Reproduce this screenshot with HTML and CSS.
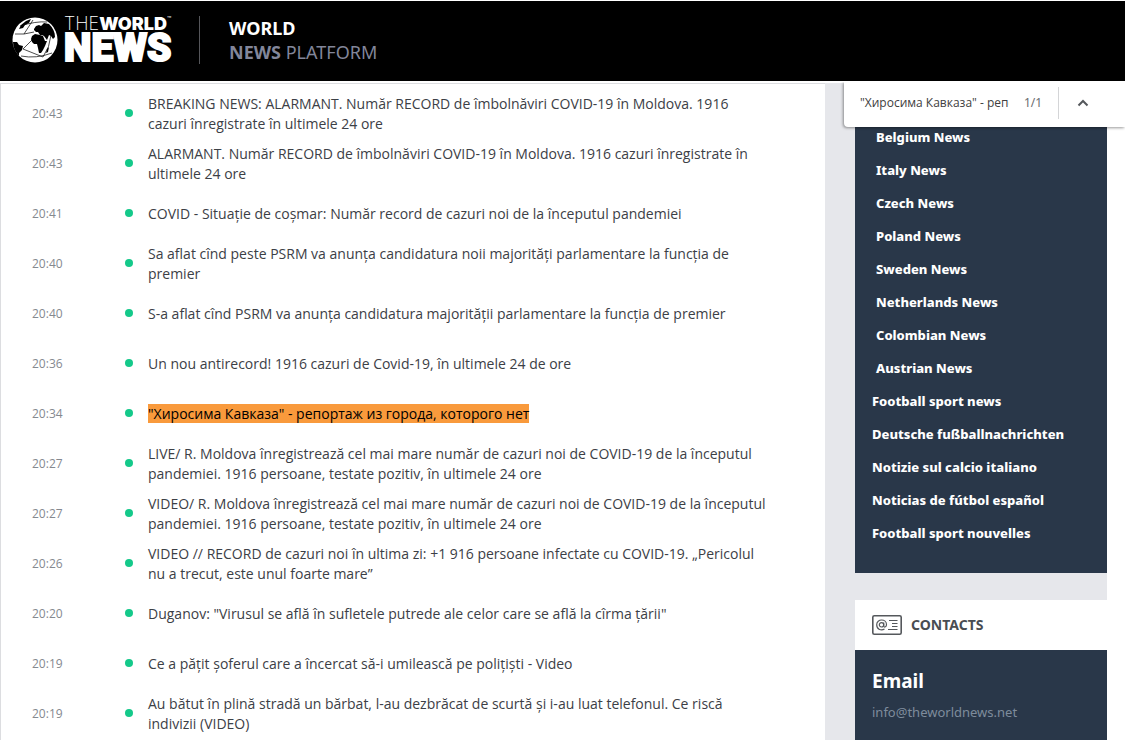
FILE: index.html
```html
<!DOCTYPE html>
<html lang="en">
<head>
  <meta charset="UTF-8">
  <meta name="viewport" content="width=device-width, initial-scale=1.0">
  <title>The World News</title>
  <link rel="stylesheet" href="styles.css">
</head>
<body>
  <header class="header">
    <a class="logo" href="#" aria-label="The World News">
      <svg class="globe" viewBox="0 0 46 46" aria-hidden="true">
        <circle cx="23" cy="23" r="22.5" fill="#fff"/>
        <g fill="#000">
          <!-- Europe and Asia -->
          <path d="M22 12l2-3 3-1 2 1 3-3 5 1c4 4 6 8 6 13l-2 2-2-3-2-1-2 5-3-4-2-1-2 0-2-3-2 0-2-2z"/>
          <!-- Africa -->
          <path d="M20 19l3-2 5 1 3 1 2 5 2 0-2 5-2 4-2 3-2 0-1-5-1-4-3 0-2-2-1-3z"/>
          <!-- South America -->
          <path d="M1 25l4 0 2 3 4 1-1 4-3 3 0 3C3 35 1 30 1 25z"/>
          <!-- North America -->
          <path d="M9 8l5-4 5-2-2 4-4 2-2 3-4 1z"/>
          <path d="M35 32l2-2-1 5-2 1z"/>
        </g>
        <g fill="none" stroke="#000" stroke-width="0.7">
          <path d="M3 17L12 17L21 3M12 17L22 15M8 9Q24 4 35 5M11 32L31 40M11 32L21 22M9 39Q24 42 40 36M31 40Q38 30 39 18"/>
        </g>
      </svg>
      <span class="logo-text">
        <span class="logo-top"><span class="logo-the">THE</span><b>WORLD</b><sup>™</sup></span>
        <span class="logo-bottom">NEWS</span>
      </span>
    </a>
    <div class="platform">
      <strong>WORLD</strong>
      <span><b>NEWS</b> PLATFORM</span>
    </div>
  </header>

  <div class="page">
    <main class="news">
      <ul class="news-list">
        <li><time>20:43</time><a href="#">BREAKING NEWS: ALARMANT. Număr RECORD de îmbolnăviri COVID-19 în Moldova. 1916 cazuri înregistrate în ultimele 24 ore</a></li>
        <li><time>20:43</time><a href="#">ALARMANT. Număr RECORD de îmbolnăviri COVID-19 în Moldova. 1916 cazuri înregistrate în ultimele 24 ore</a></li>
        <li><time>20:41</time><a href="#">COVID - Situație de coșmar: Număr record de cazuri noi de la începutul pandemiei</a></li>
        <li><time>20:40</time><a href="#">Sa aflat cînd peste PSRM va anunța candidatura noii majorități parlamentare la funcția de premier</a></li>
        <li><time>20:40</time><a href="#">S-a aflat cînd PSRM va anunța candidatura majorității parlamentare la funcția de premier</a></li>
        <li><time>20:36</time><a href="#">Un nou antirecord! 1916 cazuri de Covid-19, în ultimele 24 de ore</a></li>
        <li><time>20:34</time><a href="#"><mark>"Хиросима Кавказа" - репортаж из города, которого нет</mark></a></li>
        <li><time>20:27</time><a href="#">LIVE/ R. Moldova înregistrează cel mai mare număr de cazuri noi de COVID-19 de la începutul pandemiei. 1916 persoane, testate pozitiv, în ultimele 24 ore</a></li>
        <li><time>20:27</time><a href="#">VIDEO/ R. Moldova înregistrează cel mai mare număr de cazuri noi de COVID-19 de la începutul pandemiei. 1916 persoane, testate pozitiv, în ultimele 24 ore</a></li>
        <li><time>20:26</time><a href="#">VIDEO // RECORD de cazuri noi în ultima zi: +1 916 persoane infectate cu COVID-19. „Pericolul nu a trecut, este unul foarte mare”</a></li>
        <li><time>20:20</time><a href="#">Duganov: "Virusul se află în sufletele putrede ale celor care se află la cîrma țării"</a></li>
        <li><time>20:19</time><a href="#">Ce a pățit șoferul care a încercat să-i umilească pe polițiști - Video</a></li>
        <li><time>20:19</time><a href="#">Au bătut în plină stradă un bărbat, l-au dezbrăcat de scurtă și i-au luat telefonul. Ce riscă indivizii (VIDEO)</a></li>
      </ul>
    </main>

    <aside class="sidebar">
      <nav class="panel links">
        <a class="country" href="#">Belgium News</a>
        <a class="country" href="#">Italy News</a>
        <a class="country" href="#">Czech News</a>
        <a class="country" href="#">Poland News</a>
        <a class="country" href="#">Sweden News</a>
        <a class="country" href="#">Netherlands News</a>
        <a class="country" href="#">Colombian News</a>
        <a class="country" href="#">Austrian News</a>
        <a href="#">Football sport news</a>
        <a href="#">Deutsche fußballnachrichten</a>
        <a href="#">Notizie sul calcio italiano</a>
        <a href="#">Noticias de fútbol español</a>
        <a href="#">Football sport nouvelles</a>
      </nav>
      <h2 class="panel-title">
        <svg width="30" height="20" viewBox="0 0 30 20" fill="none" stroke="#55585c" stroke-width="1.2" aria-hidden="true">
          <rect x="0.8" y="0.8" width="28.4" height="18.4" rx="1.5" stroke-width="1.6"/>
          <circle cx="9.5" cy="9.8" r="2.2"/>
          <path d="M11.7 7.6v3.2c0 2 2.8 1.6 2.8-1 0-6.4-9.8-6.4-9.8 0 0 5 4.800 6 7.800 4.200"/>
          <path d="M17 5.500h8.500M20 8.500h5.500M20 11.500h5.500M16 14.500h9.500"/>
        </svg>
        CONTACTS
      </h2>
      <section class="panel contacts">
        <h3>Email</h3>
        <a href="#">info@theworldnews.net</a>
      </section>
    </aside>

    <form class="find-bar">
      <input type="text" aria-label="Find in page" value="&quot;Хиросима Кавказа&quot; - репортаж из города, которого нет">
      <span class="find-count">1/1</span>
      <button type="button" aria-label="Previous">
        <svg width="12" height="8" viewBox="0 0 12 8" fill="none" stroke="#55585c" stroke-width="2" aria-hidden="true">
          <path d="M1.500 6.500L6 2l4.500 4.500"/>
        </svg>
      </button>
    </form>
  </div>
</body>
</html>
```

FILE: styles.css
```css
* {
  box-sizing: border-box;
}
body {
  margin: 0;
  min-height: 100vh;
  display: flex;
  flex-direction: column;
  font-family: "Noto Sans", "Open Sans", sans-serif;
  font-size: 13px;
  line-height: 20px;
  color: #494d52;
  background-color: #fff;
}
a {
  color: inherit;
  text-decoration: none;
}

/* Header */
.header {
  display: flex;
  align-items: center;
  height: 81px;
  padding: 0 0 2px 12px;
  background-color: #000;
  border-top: 1px solid #fff;
  color: #fff;
}
.logo {
  display: flex;
  align-items: center;
  gap: 6px;
  width: 188px;
  height: 48px;
  border-right: 1px solid #55565a;
}
.globe {
  width: 46px;
  height: 46px;
}
.logo-text {
  display: flex;
  flex-direction: column;
}
.logo-top {
  display: flex;
  font-family: Inter, sans-serif;
  font-size: 18px;
  line-height: 16px;
}
.logo-the {
  font-weight: 200;
}
.logo-top b {
  font-weight: 900;
}
.logo-top sup {
  font-size: 7px;
  line-height: 8px;
}
.logo-bottom {
  font-family: Roboto, sans-serif;
  font-size: 39px;
  line-height: 32px;
  font-weight: 900;
  -webkit-text-stroke: 2px #fff;
}
.platform {
  display: flex;
  flex-direction: column;
  padding-left: 29px;
  font-size: 18px;
  line-height: 24px;
}
.platform span {
  color: #82869a;
}

/* Layout */
.page {
  position: relative;
  flex: 1;
  display: flex;
  margin-top: 2px;
  padding-right: 18px;
}
.news {
  flex: 1;
  padding: 4px 0 0 31px;
  border-top: 1px solid #dcdde0;
  border-left: 1px solid #dcdde0;
}
.news-list {
  margin: 0;
  padding: 0;
  list-style: none;
  font-family: "Open Sans", "Noto Sans", sans-serif;
}
.news-list li {
  display: flex;
  align-items: center;
  height: 50px;
}
.news-list time {
  width: 93px;
  padding-top: 1px;
  font-size: 12px;
  color: #85898f;
}
.news-list li::before {
  content: "";
  order: 1;
  flex: none;
  width: 8px;
  height: 8px;
  border-radius: 50%;
  background-color: #14c98a;
}
.news-list a {
  order: 2;
  max-width: 650px;
  padding: 1px 15px 0;
  font-size: 14px;
  color: #3c4046;
}
.news-list mark {
  color: #000;
  background-color: #f99a3c;
}

/* Sidebar */
.sidebar {
  display: flex;
  flex-direction: column;
  width: 282px;
  padding-left: 30px;
  background-color: #e6e7eb;
}
.panel {
  padding-left: 17px;
  background-color: #293749;
  color: #fff;
}
.links {
  display: flex;
  flex-direction: column;
  padding-top: 38px;
  padding-bottom: 23px;
  font-weight: 800;
  line-height: 33px;
}
.country {
  padding-left: 4px;
}
.panel-title {
  display: flex;
  align-items: center;
  gap: 9px;
  height: 50px;
  margin: 27px 0 0;
  padding-left: 17px;
  background-color: #fff;
  font-size: 14px;
  font-weight: 700;
}
.contacts {
  flex: 1;
  padding-top: 18px;
}
.contacts h3 {
  margin: 0 0 8px;
  font-size: 19px;
  line-height: 26px;
}
.contacts a {
  color: #7e8c9c;
}

/* Find bar */
.find-bar {
  position: absolute;
  top: -1px;
  right: 0;
  display: flex;
  align-items: center;
  width: 281px;
  height: 45px;
  padding: 0 0 4px 16px;
  background-color: #fff;
  border-radius: 0 0 0 4px;
  box-shadow: -1px 1px 3px rgba(0, 0, 0, 0.4);
  clip-path: inset(0 0 -6px -6px);
}
.find-bar input {
  width: 149px;
  padding: 0;
  border: 0;
  outline: 0;
  font-family: "Open Sans", "Noto Sans", sans-serif;
  font-size: 12px;
  color: #404040;
}
.find-count {
  width: 49px;
  padding-left: 15px;
  font-size: 12px;
  color: #6a6d70;
}
.find-bar button {
  display: flex;
  align-items: center;
  height: 32px;
  padding: 0 18px;
  border: 0;
  border-left: 1px solid #d4d5d7;
  background: none;
  cursor: pointer;
}
```
